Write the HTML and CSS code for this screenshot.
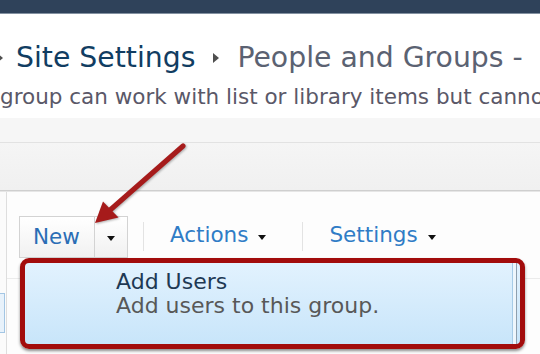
FILE: index.html
```html
<!DOCTYPE html>
<html>
<head>
<meta charset="utf-8">
<link rel="stylesheet" href="styles.css">
</head>
<body>
<div class="topbar"></div>
<header class="header">
  <h1 class="crumbs">
    <span class="crumb-sep lead"></span>
    <a class="crumb-link" href="#">Site Settings</a>
    <span class="crumb-sep"></span>
    <span class="crumb-current">People and Groups -</span>
  </h1>
  <p class="desc">group can work with list or library items but cannot delete them.</p>
</header>
<div class="band-a"></div>
<div class="band-b"></div>
<div class="workspace">
  <nav class="leftnav"><div class="nav-selected"></div></nav>
  <section class="content">
    <div class="toolbar">
      <div class="splitbtn">
        <span class="btn-main">New</span>
        <span class="btn-drop"><i class="caret"></i></span>
      </div>
      <span class="tsep"></span>
      <span class="tmenu">Actions<i class="caret"></i></span>
      <span class="tsep"></span>
      <span class="tmenu">Settings<i class="caret"></i></span>
    </div>
    <div class="menu">
      <div class="item-title">Add Users</div>
      <div class="item-desc">Add users to this group.</div>
    </div>
  </section>
</div>
<svg class="annot" width="540" height="354" viewBox="0 0 540 354">
  <line x1="183" y1="146" x2="109" y2="211" stroke="#a61b1b" stroke-width="5" stroke-linecap="round"/>
  <polygon points="95,223 103,201.5 118.5,217.5" fill="#a61b1b"/>
</svg>
</body>
</html>
```
FILE: styles.css
```css
html, body {
  margin: 0;
  padding: 0;
}
body {
  width: 540px;
  height: 354px;
  overflow: hidden;
  position: relative;
  background: #ffffff;
  font-family: "DejaVu Sans", Verdana, sans-serif;
}
.topbar {
  height: 13px;
  background: #2f425a;
  border-bottom: 1px solid #8391a1;
}
.header {
  height: 104px;
  box-sizing: border-box;
  padding-top: 27px;
  white-space: nowrap;
  overflow: hidden;
  background: #ffffff;
}
.crumbs {
  margin: 0;
  display: flex;
  align-items: center;
  height: 34px;
  font-weight: 400;
  font-size: 28.3px;
  line-height: 34px;
}
.crumb-sep {
  width: 0;
  height: 0;
  border-left: 6px solid #4f4f4f;
  border-top: 5px solid transparent;
  border-bottom: 5px solid transparent;
  margin: 0 18px;
  flex: none;
}
.crumb-sep.lead {
  margin-left: -3px;
  margin-right: 13px;
}
.crumb-link {
  color: #113d62;
  text-decoration: none;
}
.crumb-current {
  color: #5b6272;
}
.desc {
  margin: 8px 0 0;
  font-size: 21.5px;
  line-height: 28px;
  color: #5a5868;
}
.band-a {
  height: 24px;
  background: #f6f6f6;
  border-bottom: 1px solid #e2e2e2;
}
.band-b {
  height: 47px;
  background: linear-gradient(#f5f5f5, #f0f0f0);
  border-bottom: 1px solid #cfcfcf;
}
.workspace {
  display: flex;
  height: 162px;
  border-top: 1px solid #e6e6e6;
  background: #fdfdfd;
}
.leftnav {
  width: 6px;
  flex: none;
  border-right: 1px solid #dedede;
  background: #fbfbfb;
}
.nav-selected {
  margin-top: 101px;
  height: 40px;
  width: 5px;
  box-sizing: border-box;
  border: 1px solid #a3c6e4;
  border-left: none;
  background: #e8f2fb;
}
.content {
  flex: 1;
  position: relative;
}
.toolbar {
  display: flex;
  align-items: flex-start;
  padding: 24px 0 20px 12px;
  border-bottom: 1px solid #ebebeb;
  font-size: 21.5px;
}
.splitbtn {
  display: flex;
  height: 42px;
  box-sizing: border-box;
  border: 1px solid #d3d3d3;
  background: linear-gradient(#ffffff, #f1f1f1);
}
.btn-main {
  padding: 0 14px 0 13px;
  line-height: 40px;
  color: #2a6db5;
  border-right: 1px solid #d3d3d3;
}
.btn-drop {
  width: 32px;
  display: flex;
  align-items: center;
  justify-content: center;
}
.btn-drop .caret {
  margin-top: 2px;
}
.caret {
  display: block;
  width: 0;
  height: 0;
  border-left: 4.5px solid transparent;
  border-right: 4.5px solid transparent;
  border-top: 5px solid #111111;
}
.tsep {
  width: 1px;
  height: 29px;
  background: #e3e3e3;
  margin: 6px 26px 0 15px;
  flex: none;
}
.tmenu {
  display: flex;
  align-items: center;
  height: 34px;
  margin-top: 2px;
  line-height: 34px;
  color: #2f7cc6;
  padding-right: 21px;
}
.tmenu .caret {
  margin-left: 10px;
  margin-top: 5px;
}
.menu {
  position: absolute;
  left: 13px;
  top: 66px;
  width: 505px;
  height: 91px;
  box-sizing: border-box;
  border: 5px solid #a20c0c;
  border-radius: 9px;
  background: linear-gradient(#e2f2fe, #c8e5fa);
  box-shadow: 0 2px 3px rgba(0, 0, 0, 0.45);
  padding: 7px 0 0 91px;
  font-size: 22px;
  line-height: 24px;
}
.menu::after {
  content: "";
  position: absolute;
  top: 0;
  bottom: 0;
  right: 3px;
  width: 3px;
  border-left: 1px solid #a6cbe7;
  border-right: 1px solid #8e9fae;
  background: #eef6fc;
}
.item-title {
  color: #1e3954;
}
.item-desc {
  color: #585858;
}
.annot {
  position: absolute;
  left: 0;
  top: 0;
  pointer-events: none;
  filter: drop-shadow(1px 1px 1px rgba(0, 0, 0, 0.3));
}
```
